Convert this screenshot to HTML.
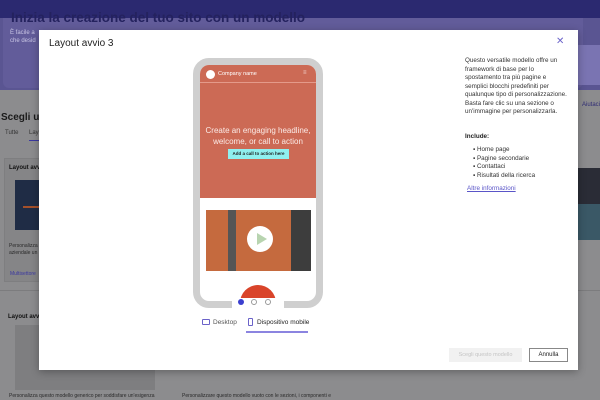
<!DOCTYPE html>
<html><head><meta charset="utf-8"><style>
*{margin:0;padding:0;box-sizing:border-box}
body{width:600px;height:400px;overflow:hidden;position:relative;background:#8c8c8e;font-family:"Liberation Sans",sans-serif}
.abs{position:absolute}
</style></head><body>
<div class="abs" style="left:0;top:0;width:600px;height:18px;background:#2b2970"></div>
<div class="abs" style="left:0;top:18px;width:600px;height:72px;background:#5a5592"></div>
<div class="abs" style="left:3px;top:18px;width:580px;height:70px;background:#625c9a;border-radius:0 0 6px 6px"></div>
<div class="abs" style="left:11px;top:10px;color:#24225e;font-size:13.5px;font-weight:bold;white-space:nowrap">Inizia la creazione del tuo sito con un modello</div>
<div class="abs" style="left:10px;top:29px;color:#c8c5e4;font-size:6px;line-height:8px">È facile a<br>che desid</div>
<div class="abs" style="left:578px;top:45px;width:22px;height:40px;background:#7a74b2"></div>
<div class="abs" style="left:582px;top:102px;color:#2f2c74;font-size:6px">Aiutaci</div>
<div class="abs" style="left:1px;top:112px;color:#1a1a1a;font-size:10px;font-weight:bold">Scegli un</div>
<div class="abs" style="left:5px;top:130px;color:#333;font-size:6px">Tutte</div>
<div class="abs" style="left:29px;top:130px;color:#333;font-size:6px">Layo</div>
<div class="abs" style="left:29px;top:140px;width:10px;height:1px;background:#3b38a0"></div>
<div class="abs" style="left:4px;top:158px;width:40px;height:124px;background:#858587;border:1px solid #7e7e80"></div>
<div class="abs" style="left:9px;top:165px;color:#111;font-size:6px;font-weight:bold">Layout avvi</div>
<div class="abs" style="left:15px;top:180px;width:30px;height:50px;background:#1f2c45"></div>
<div class="abs" style="left:23px;top:206px;width:16px;height:2px;background:#a4502a"></div>
<div class="abs" style="left:9px;top:243px;color:#2a2a2a;font-size:5px;line-height:7px">Personalizza<br>aziendale un</div>
<div class="abs" style="left:10px;top:271px;color:#3b38a0;font-size:5px">Multisettore</div>
<div class="abs" style="left:0;top:290px;width:600px;height:1px;background:#7c7c7e"></div>
<div class="abs" style="left:8px;top:314px;color:#111;font-size:6px;font-weight:bold">Layout avv</div>
<div class="abs" style="left:15px;top:325px;width:140px;height:65px;background:#7e7e80"></div>
<div class="abs" style="left:578px;top:168px;width:22px;height:36px;background:#2a2c36"></div>
<div class="abs" style="left:578px;top:204px;width:22px;height:36px;background:#3a5866"></div>
<div class="abs" style="left:9px;top:393px;color:#2a2a2a;font-size:5px;white-space:nowrap">Personalizza questo modello generico per soddisfare un'esigenza</div>
<div class="abs" style="left:182px;top:393px;color:#2a2a2a;font-size:5px;white-space:nowrap">Personalizzare questo modello vuoto con le sezioni, i componenti e</div>

<div class="abs" style="left:39px;top:30px;width:539px;height:340px;background:#fff;box-shadow:0 2px 8px rgba(0,0,0,.3)"></div>
<div class="abs" style="left:49px;top:38px;color:#222;font-size:10px">Layout avvio 3</div>
<div class="abs" style="left:556px;top:36px;color:#6b63c9;font-size:10px">✕</div>

<div class="abs" style="left:193px;top:58px;width:130px;height:250px;border:7px solid #cfcfcf;border-radius:16px;background:#fff;overflow:hidden">
 <div style="height:133px;background:#cc6a55;position:relative">
  <div class="abs" style="left:6px;top:5px;width:9px;height:9px;border-radius:50%;background:#fff"></div>
  <div class="abs" style="left:18px;top:6px;color:#fff;font-size:5.5px">Company name</div>
  <div class="abs" style="left:103px;top:5px;color:#f3d6cf;font-size:6px">≡</div>
  <div class="abs" style="left:0;top:17px;width:116px;height:1px;background:#e49a8a"></div>
  <div class="abs" style="left:0;top:60px;width:116px;text-align:center;color:#fbeae6;font-size:8px;line-height:11px">Create an engaging headline,<br>welcome, or call to action</div>
  <div class="abs" style="left:28px;top:84px;width:61px;height:10px;background:#8ff0ef;color:#222;font-size:4.5px;font-weight:bold;text-align:center;line-height:10px">Add a call to action here</div>
 </div>
 <div class="abs" style="left:6px;top:145px;width:105px;height:61px;background:#c56a3e">
  <div class="abs" style="left:22px;top:0;width:8px;height:61px;background:#555"></div>
  <div class="abs" style="left:85px;top:0;width:20px;height:61px;background:#3d3d3d"></div>
  <div class="abs" style="left:41px;top:16px;width:26px;height:26px;border-radius:50%;background:#fff"></div>
  <div class="abs" style="left:51px;top:23px;width:0;height:0;border-left:10px solid #b8d4b0;border-top:6px solid transparent;border-bottom:6px solid transparent"></div>
 </div>
 <div class="abs" style="left:40px;top:220px;width:36px;height:36px;border-radius:50%;background:#d9442a"></div>
</div>
<div class="abs" style="left:232px;top:298px;width:52px;height:12px;background:#fff"></div>
<div class="abs" style="left:238px;top:299px;width:6px;height:6px;border-radius:50%;background:#3b3fcf"></div>
<div class="abs" style="left:251px;top:299px;width:6px;height:6px;border-radius:50%;border:1px solid #999"></div>
<div class="abs" style="left:265px;top:299px;width:6px;height:6px;border-radius:50%;border:1px solid #999"></div>

<div class="abs" style="left:202px;top:319px;width:8px;height:6px;border:1px solid #6b63c9;border-radius:1px"></div>
<div class="abs" style="left:213px;top:319px;color:#555;font-size:6.5px">Desktop</div>
<div class="abs" style="left:248px;top:318px;width:5px;height:8px;border:1px solid #6b63c9;border-radius:1px"></div>
<div class="abs" style="left:257px;top:319px;color:#222;font-size:6.5px">Dispositivo mobile</div>
<div class="abs" style="left:246px;top:331px;width:62px;height:2px;background:#8b84e0"></div>

<div class="abs" style="left:465px;top:57px;width:104px;color:#333;font-size:6.3px;line-height:8.5px">Questo versatile modello offre un framework di base per lo spostamento tra più pagine e semplici blocchi predefiniti per qualunque tipo di personalizzazione. Basta fare clic su una sezione o un'immagine per personalizzarla.</div>
<div class="abs" style="left:465px;top:133px;color:#222;font-size:6.3px;font-weight:bold">Include:</div>
<div class="abs" style="left:473px;top:146px;color:#333;font-size:6.3px;line-height:8.5px">▪ Home page<br>▪ Pagine secondarie<br>▪ Contattaci<br>▪ Risultati della ricerca</div>
<div class="abs" style="left:467px;top:185px;color:#5a55c8;font-size:6.3px;text-decoration:underline">Altre informazioni</div>

<div class="abs" style="left:449px;top:348px;width:73px;height:14px;background:#f1f1f1;color:#c4c4c4;font-size:5.5px;text-align:center;line-height:14px">Scegli questo modello</div>
<div class="abs" style="left:529px;top:348px;width:39px;height:14px;border:1px solid #888;color:#222;font-size:6px;text-align:center;line-height:12px">Annulla</div>
</body></html>
